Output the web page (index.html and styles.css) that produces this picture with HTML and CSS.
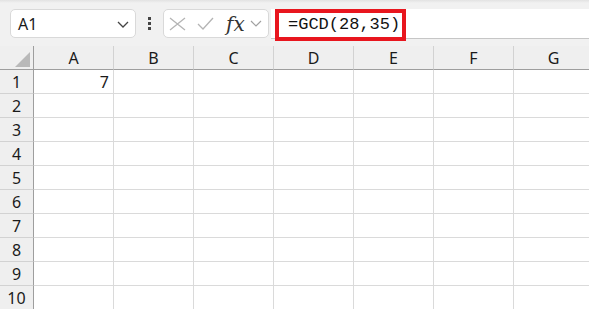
FILE: index.html
```html
<!DOCTYPE html>
<html lang="en">
<head>
  <meta charset="UTF-8" />
  <title>GCD</title>
  <link rel="stylesheet" href="styles.css">
</head>
<body>
  <div class="toolbar">
    <div class="name-box">
      <span>A1</span>
      <svg class="chev" width="12" height="7" viewBox="0 0 12 7"><path d="M1 1 L6 6 L11 1" fill="none" stroke="#444" stroke-width="1.3"/></svg>
    </div>
    <div class="dots"><i></i><i></i><i></i></div>
    <div class="fx-box">
      <svg width="17" height="14" viewBox="0 0 17 14"><path d="M1 1 L16 13 M16 1 L1 13" stroke="#b4b4b4" stroke-width="1.3" fill="none"/></svg>
      <svg width="17" height="13" viewBox="0 0 17 13"><path d="M1 7 L6 12 L16 1" stroke="#b4b4b4" stroke-width="1.3" fill="none"/></svg>
      <span class="fx">fx</span>
      <svg width="12" height="7" viewBox="0 0 12 7"><path d="M1 1 L6 6 L11 1" fill="none" stroke="#a0a0a0" stroke-width="1.2"/></svg>
    </div>
    <div class="formula">
      <div class="highlight">=GCD(28,35)</div>
    </div>
  </div>

  <div class="sheet">
    <div class="corner"><span class="tri"></span></div>
    <div class="col">A</div>
    <div class="col">B</div>
    <div class="col">C</div>
    <div class="col">D</div>
    <div class="col">E</div>
    <div class="col">F</div>
    <div class="col">G</div>

    <div class="row">1</div><div class="cell num">7</div><div class="cell"></div><div class="cell"></div><div class="cell"></div><div class="cell"></div><div class="cell"></div><div class="cell"></div>
    <div class="row">2</div><div class="cell"></div><div class="cell"></div><div class="cell"></div><div class="cell"></div><div class="cell"></div><div class="cell"></div><div class="cell"></div>
    <div class="row">3</div><div class="cell"></div><div class="cell"></div><div class="cell"></div><div class="cell"></div><div class="cell"></div><div class="cell"></div><div class="cell"></div>
    <div class="row">4</div><div class="cell"></div><div class="cell"></div><div class="cell"></div><div class="cell"></div><div class="cell"></div><div class="cell"></div><div class="cell"></div>
    <div class="row">5</div><div class="cell"></div><div class="cell"></div><div class="cell"></div><div class="cell"></div><div class="cell"></div><div class="cell"></div><div class="cell"></div>
    <div class="row">6</div><div class="cell"></div><div class="cell"></div><div class="cell"></div><div class="cell"></div><div class="cell"></div><div class="cell"></div><div class="cell"></div>
    <div class="row">7</div><div class="cell"></div><div class="cell"></div><div class="cell"></div><div class="cell"></div><div class="cell"></div><div class="cell"></div><div class="cell"></div>
    <div class="row">8</div><div class="cell"></div><div class="cell"></div><div class="cell"></div><div class="cell"></div><div class="cell"></div><div class="cell"></div><div class="cell"></div>
    <div class="row">9</div><div class="cell"></div><div class="cell"></div><div class="cell"></div><div class="cell"></div><div class="cell"></div><div class="cell"></div><div class="cell"></div>
    <div class="row">10</div><div class="cell"></div><div class="cell"></div><div class="cell"></div><div class="cell"></div><div class="cell"></div><div class="cell"></div><div class="cell"></div>
  </div>
</body>
</html>
```

FILE: styles.css
```css
body {
  margin: 0;
  font-family: 'Noto Sans', 'Open Sans', sans-serif;
  color: #1a1a1a;
  background: #fff;
  overflow: hidden;
  width: 589px;
  height: 309px;
}
.toolbar {
  height: 46px;
  box-sizing: border-box;
  padding-top: 9px;
  display: flex;
  align-items: flex-start;
  background: linear-gradient(#e2e2e2 0, #f1f1f1 3px, #f1f1f1 100%);
}
.name-box {
  margin-left: 10px;
  width: 126px;
  height: 29px;
  box-sizing: border-box;
  background: #fff;
  border: 1px solid #d9d9d9;
  border-radius: 5px;
  display: flex;
  align-items: center;
  justify-content: space-between;
  padding: 0 6px 0 7px;
  font-size: 16px;
}
.name-box .chev {
  margin-top: 2px;
}
.dots {
  width: 27px;
  height: 29px;
  display: flex;
  flex-direction: column;
  align-items: center;
  justify-content: center;
  gap: 2px;
}
.dots i {
  display: block;
  width: 3px;
  height: 3px;
  background: #444;
}
.fx-box {
  width: 106px;
  height: 29px;
  box-sizing: border-box;
  background: #fff;
  border: 1px solid #d9d9d9;
  border-radius: 5px;
  display: flex;
  align-items: center;
  padding-left: 5px;
  gap: 11px;
}
.fx-box .fx {
  font-family: 'DejaVu Serif', 'Liberation Serif', serif;
  font-style: italic;
  font-size: 20px;
  color: #333;
  margin-left: 1px;
  margin-right: -6px;
  line-height: 1;
}
.formula {
  flex: 1;
  margin-left: 2px;
  height: 29px;
  background: #fff;
  border-bottom: 1px solid #c6c6c6;
}
.highlight {
  margin-left: 4px;
  width: 131px;
  height: 32px;
  box-sizing: border-box;
  border: 4px solid #e8161e;
  padding-left: 9px;
  font-family: 'Liberation Mono', monospace;
  font-size: 17px;
  line-height: 23px;
  color: #111;
  background: #fff;
}
.sheet {
  display: grid;
  grid-template-columns: 34px repeat(7, 80px);
  grid-auto-rows: 24px;
}
.sheet > div {
  box-sizing: border-box;
}
.corner {
  background: #efefef;
  border-bottom: 1px solid #9e9e9e;
  border-right: 1px solid #9e9e9e;
  position: relative;
}
.tri {
  position: absolute;
  right: 3px;
  bottom: 2px;
  width: 0;
  height: 0;
  border-left: 15px solid transparent;
  border-bottom: 15px solid #b9b9b9;
}
.col {
  background: #efefef;
  border-bottom: 1px solid #9e9e9e;
  border-right: 1px solid #d2d2d2;
  text-align: center;
  font-size: 16px;
  line-height: 24px;
}
.row {
  background: #efefef;
  border-right: 1px solid #9e9e9e;
  border-bottom: 1px solid #d2d2d2;
  text-align: center;
  font-size: 16px;
  line-height: 24px;
}
.cell {
  border-right: 1px solid #dadada;
  border-bottom: 1px solid #dadada;
}
.num {
  text-align: right;
  padding-right: 4px;
  font-size: 16px;
  line-height: 24px;
}
```
